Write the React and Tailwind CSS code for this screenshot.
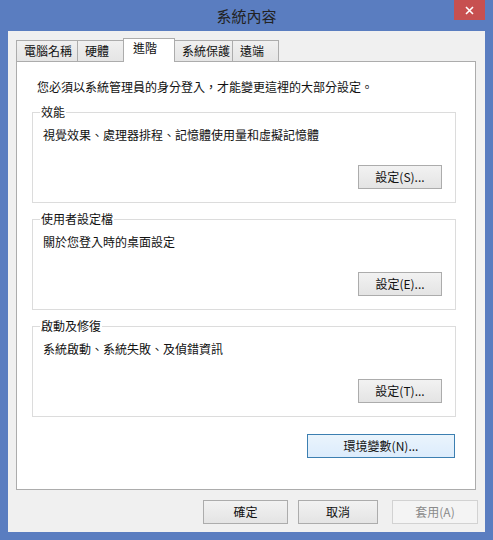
const TABS = [
  { label: "電腦名稱", w: "w-[62px]" },
  { label: "硬體", w: "w-[47px]" },
  { label: "進階", w: "w-[52px]", active: true },
  { label: "系統保護", w: "w-[59px]" },
  { label: "遠端", w: "w-[47px]" },
];

const GROUPS = [
  { title: "效能", desc: "視覺效果、處理器排程、記憶體使用量和虛擬記憶體", btn: "設定(S)..." },
  { title: "使用者設定檔", desc: "關於您登入時的桌面設定", btn: "設定(E)..." },
  { title: "啟動及修復", desc: "系統啟動、系統失敗、及偵錯資訊", btn: "設定(T)..." },
];

function Button({ children, className = "", variant = "normal" }) {
  const look =
    variant === "focus"
      ? "border-[#3c7fb1] bg-gradient-to-b from-[#eaf4fc] to-[#dcecfc] text-[#111]"
      : variant === "disabled"
      ? "border-[#d2d2d2] bg-[#f4f4f4] text-[#8a8a8a]"
      : "border-[#acacac] bg-gradient-to-b from-[#f2f2f2] to-[#e4e4e4] text-[#111]";
  return (
    <button
      type="button"
      className={`flex h-[24px] items-center justify-center border text-[12px] leading-[16px] ${look} ${className}`}
    >
      {children}
    </button>
  );
}

export default function App() {
  return (
    <div className="flex h-[540px] w-[493px] flex-col bg-[#5a7dc0] font-['Noto_Sans_CJK_TC','Noto_Sans_CJK_SC',sans-serif]">
      {/* title bar */}
      <div className="relative flex h-[31px] shrink-0 items-center justify-center">
        <span className="text-[15px] leading-[20px] text-[#222]">系統內容</span>
        <div className="absolute right-[8px] top-0 flex h-[20px] w-[31px] items-center justify-center bg-[#c75050]">
          <svg width="9" height="9" viewBox="0 0 9 9">
            <path d="M1 1L8 8M8 1L1 8" stroke="#fff" strokeWidth="1.6" />
          </svg>
        </div>
      </div>

      {/* client area */}
      <div className="mx-[8px] mb-[8px] flex flex-1 flex-col bg-[#f0f0f0] text-[12px] leading-[16px] text-[#111]">
        {/* tabs */}
        <div className="ml-[8px] mt-[8px] flex h-[22px] items-end">
          {TABS.map((t, i) => (
            <div
              key={t.label}
              className={
                t.active
                  ? `relative z-10 -mb-px -ml-px flex h-[24px] ${t.w} items-start border border-b-0 border-[#acacac] bg-white pl-[9px] pt-[1px]`
                  : `flex h-[21px] ${t.w} ${i > 0 ? "-ml-px" : ""} items-center border border-b-0 border-[#acacac] bg-gradient-to-b from-[#f0f0f0] to-[#e5e5e5] pl-[7px]`
              }
            >
              {t.label}
            </div>
          ))}
        </div>

        {/* panel */}
        <div className="ml-[8px] flex h-[429px] w-[460px] flex-col border border-[#acacac] bg-white">
          <p className="mt-[17px] pl-[20px]">您必須以系統管理員的身分登入，才能變更這裡的大部分設定。</p>

          {GROUPS.map((g, i) => (
            <div
              key={g.title}
              className={`relative ml-[15px] flex h-[91px] w-[424px] flex-col border border-[#dcdcdc] ${i === 0 ? "mt-[17px]" : "mt-[16px]"}`}
            >
              <span className="absolute -top-[9px] left-[7px] bg-white px-[1px]">{g.title}</span>
              <p className="pl-[10px] pt-[14px]">{g.desc}</p>
              <Button className="mr-[13px] mt-[22px] w-[84px] self-end">{g.btn}</Button>
            </div>
          ))}

          <Button variant="focus" className="ml-[290px] mt-[17px] w-[148px]">
            環境變數(N)...
          </Button>
        </div>

        {/* bottom buttons */}
        <div className="mt-[10px] flex justify-end pr-[7px]">
          <Button className="w-[85px]">確定</Button>
          <Button className="ml-[10px] w-[80px]">取消</Button>
          <Button variant="disabled" className="ml-[14px] w-[86px]">套用(A)</Button>
        </div>
      </div>
    </div>
  );
}
